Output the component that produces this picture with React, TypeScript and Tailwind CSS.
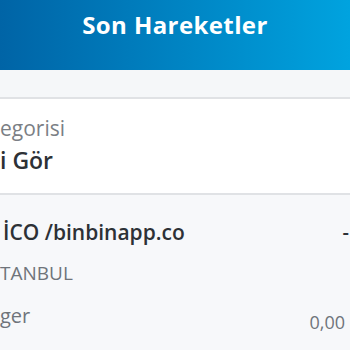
const App = () => {
  return (
    <div className="w-[350px] h-[350px] overflow-hidden bg-[#f7f8fa] font-['Open_Sans',sans-serif]">
      <div className="h-[70px] bg-gradient-to-r from-[#0064a6] to-[#00a3df] flex justify-center pt-[9px]">
        <h1 className="text-white font-bold text-[24px] leading-[32px] tracking-[0.4px]">
          Son Hareketler
        </h1>
      </div>

      <div className="h-[29px] bg-[#f5f7f9] border-b-2 border-[#e0e2e5]" />

      <div className="h-[96px] bg-white border-b-2 border-[#e0e2e5] pt-[16px]">
        <div className="text-[21px] leading-[26px] text-[#7b7f85]">egorisi</div>
        <div className="mt-[4px] text-[23px] leading-[30px] font-semibold text-[#2d3136]">
          i Gör
        </div>
      </div>

      <div className="pt-[23px]">
        <div className="flex items-center justify-between">
          <span className="pl-[3px] text-[21px] leading-[28px] font-semibold text-[#2d3136]">
            İCO /binbinapp.co
          </span>
          <span className="pr-[1px] text-[20px] leading-[28px] font-semibold text-[#2d3136]">
            -
          </span>
        </div>
        <div className="mt-[14px] text-[19px] leading-[26px] text-[#6f747a]">TANBUL</div>
        <div className="flex items-end justify-between mt-[17px]">
          <span className="text-[20px] leading-[26px] text-[#6f747a]">ger</span>
          <span className="pr-[5px] text-[18px] leading-[24px] text-[#6f747a] -mb-[5px]">
            0,00
          </span>
        </div>
      </div>
    </div>
  );
};

export default App;
